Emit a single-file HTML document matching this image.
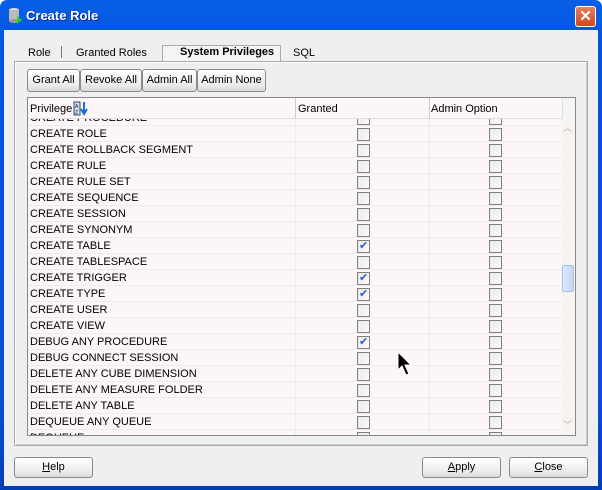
<!DOCTYPE html>
<html><head><style>
*{margin:0;padding:0;box-sizing:border-box}
body{width:602px;height:490px;overflow:hidden;background:#fff;font-family:"Liberation Sans",sans-serif;font-size:11px;color:#000;position:relative}
.win{position:absolute;left:0;top:0;width:602px;height:490px;background:linear-gradient(#0a5fe6,#0053e0 10%,#0a4fd8 80%,#003fb8);border-radius:7px 7px 0 0}
.title{position:absolute;left:26px;top:8px;color:#fff;font-weight:bold;font-size:13px;text-shadow:1px 1px #0a2a8a}
.xbtn{position:absolute;left:575px;top:6px;width:21px;height:21px;border:1px solid #fff;border-radius:3px;background:linear-gradient(#e8805a,#d0461c);color:#fff;font-weight:bold;font-size:15px;text-align:center;line-height:19px}
.client{position:absolute;left:4px;top:30px;width:594px;height:456px;background:#efefef}
.a{position:absolute}
.btn{position:absolute;height:23px;border:1px solid #8a8a8a;border-radius:3px;background:linear-gradient(#fff,#ececec 70%,#d8d8d8);text-align:center;line-height:21px;font-size:11px}
.row{position:absolute;left:0;width:548px;height:16px;border-bottom:1px solid #ececec;background:#fdf6f6}
.row span{position:absolute;left:2px;top:2px}
.cb{position:absolute;top:2px;width:13px;height:13px;border:1px solid #7f7f7f;background:linear-gradient(135deg,#e9e9e9,#fbfbfb)}
.cb.c:after{content:"✔";position:absolute;left:1px;top:-2px;color:#2d5ad6;font-size:11px}
.vl{position:absolute;top:0;bottom:0;width:1px;background:#ececec}
</style></head><body>
<div class="win">
<svg class="a" style="left:7px;top:7px" width="16" height="18"><ellipse cx="7" cy="3" rx="5" ry="2" fill="#ddd"/><rect x="2" y="3" width="10" height="11" fill="#bbb"/><ellipse cx="7" cy="14" rx="5" ry="2" fill="#999"/><path d="M10 9 L15 13 L10 17Z" fill="#2c2"/></svg>
<div class="title">Create Role</div>
<div class="xbtn">✕</div>
<div class="client"></div>
</div>
<div class="a" style="left:28px;top:47px">Role</div>
<div class="a" style="left:61px;top:46px;width:1px;height:12px;background:#777"></div>
<div class="a" style="left:76px;top:47px">Granted Roles</div>
<div class="a" style="left:162px;top:45px;width:119px;height:17px;border:1px solid #aaa;border-bottom:none;background:#f4f4f4"></div>
<div class="a" style="left:180px;top:46px;font-weight:bold">System Privileges</div>
<div class="a" style="left:293px;top:47px">SQL</div>
<div class="a" style="left:14px;top:61px;width:574px;height:385px;border:1px solid #aaa;box-shadow:inset 1px 1px #fff,inset -1px -1px #ccc"></div>
<div class="btn" style="left:27px;top:69px;width:53px">Grant All</div>
<div class="btn" style="left:80px;top:69px;width:62px">Revoke All</div>
<div class="btn" style="left:142px;top:69px;width:55px">Admin All</div>
<div class="btn" style="left:197px;top:69px;width:69px">Admin None</div>
<div class="a" style="left:27px;top:97px;width:549px;height:339px;border:1px solid #888;background:#fdf6f6;overflow:hidden">
 <div class="a" style="left:0;top:0;width:534px;height:21px;background:#fdf6f6;border-bottom:1px solid #ddd;z-index:2">
  <span class="a" style="left:2px;top:5px">Privilege</span>
  <svg class="a" style="left:45px;top:3px" width="16" height="15"><rect x="1" y="1" width="6" height="13" fill="#cde" stroke="#446"/><text x="2" y="7" font-size="5" fill="#223">A</text><text x="2" y="13" font-size="5" fill="#223">Z</text><path d="M11 1 V11 M8 8 L11 13 L14 8" stroke="#1a6ee0" stroke-width="2" fill="none"/></svg>
  <div class="a" style="left:267px;top:0;width:1px;height:21px;background:#ccc"></div>
  <span class="a" style="left:270px;top:5px">Granted</span>
  <div class="a" style="left:401px;top:0;width:1px;height:21px;background:#ccc"></div>
  <span class="a" style="left:403px;top:5px">Admin Option</span>
 </div>
 <div class="a" style="left:534px;top:0;width:14px;height:21px;background:#f4f4f4;border-left:1px solid #ddd;z-index:2"></div>
 <div class="a" style="left:534px;top:21px;width:14px;height:317px;background:#f5f4f0;z-index:2">
  <div class="a" style="left:1px;top:2px;color:#aaa;font-size:9px">︿</div>
  <div class="a" style="left:0;top:146px;width:12px;height:27px;border:1px solid #a8c0e8;border-radius:2px;background:linear-gradient(90deg,#dce8fb,#c4d6f6)"></div>
  <div class="a" style="left:1px;top:299px;color:#aaa;font-size:9px">﹀</div>
 </div>
 <div id="rows" class="a" style="left:0;top:12px;width:548px;height:330px"></div>
</div>
<svg class="a" style="left:397px;top:351px" width="18" height="28"><path d="M1 1 L1 19 L5 15 L9 24 L12 23 L8 14 L14 14 Z" fill="#000" stroke="#fff"/></svg>
<div class="btn" style="left:14px;top:457px;width:79px;height:21px;line-height:19px"><u>H</u>elp</div>
<div class="btn" style="left:422px;top:457px;width:79px;height:21px;line-height:19px"><u>A</u>pply</div>
<div class="btn" style="left:509px;top:457px;width:79px;height:21px;line-height:19px"><u>C</u>lose</div>
<script>
var r=[["CREATE PROCEDURE",0],["CREATE ROLE",0],["CREATE ROLLBACK SEGMENT",0],["CREATE RULE",0],["CREATE RULE SET",0],["CREATE SEQUENCE",0],["CREATE SESSION",0],["CREATE SYNONYM",0],["CREATE TABLE",1],["CREATE TABLESPACE",0],["CREATE TRIGGER",1],["CREATE TYPE",1],["CREATE USER",0],["CREATE VIEW",0],["DEBUG ANY PROCEDURE",1],["DEBUG CONNECT SESSION",0],["DELETE ANY CUBE DIMENSION",0],["DELETE ANY MEASURE FOLDER",0],["DELETE ANY TABLE",0],["DEQUEUE ANY QUEUE",0],["DEQUEUE",0]];
var h='<div class="vl" style="left:267px"></div><div class="vl" style="left:401px"></div>';
r.forEach(function(x,i){h+='<div class="row" style="top:'+(i*16)+'px"><span>'+x[0]+'</span><div class="cb'+(x[1]?' c':'')+'" style="left:329px"></div><div class="cb" style="left:461px"></div></div>';});
h+='<div class="vl" style="left:267px;z-index:1"></div><div class="vl" style="left:401px;z-index:1"></div>';
document.getElementById('rows').innerHTML=h;
</script>
</body></html>
